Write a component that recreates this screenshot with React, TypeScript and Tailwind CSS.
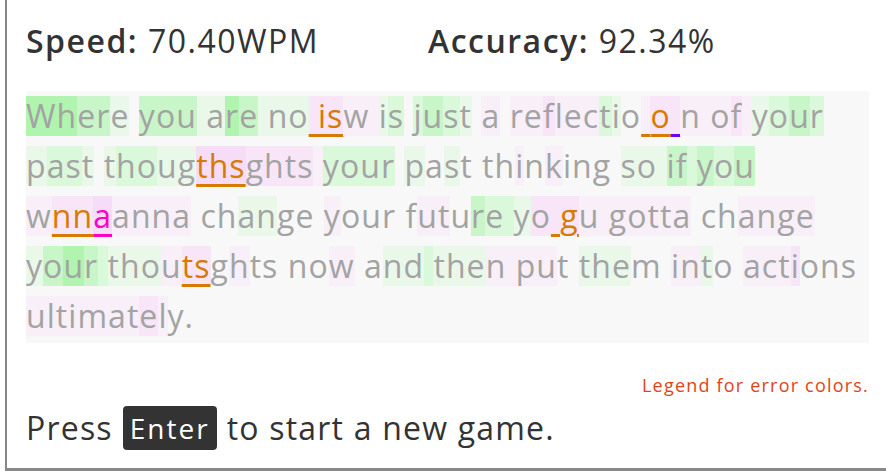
import React from 'react'

type Seg = [string, string, string?]

const bg: Record<string, string> = {
  '.': '',
  L: 'bg-[#eaf8ea]',
  l: 'bg-[#daf8da]',
  g: 'bg-[#c8f6c8]',
  G: 'bg-[#b0f4b0]',
  p: 'bg-[#f8eff8]',
  P: 'bg-[#f8e6f8]',
  Q: 'bg-[#f7dcf7]',
}

const mark: Record<string, string> = {
  n: 'text-[#a3a3a3]',
  o: 'text-[#d67a00] underline decoration-[3px] underline-offset-[6px] decoration-[#d67a00]',
  k: 'text-[#ff00c8] underline decoration-[3px] underline-offset-[6px] decoration-[#ff00c8]',
  v: 'text-[#a3a3a3] underline decoration-[3px] underline-offset-[6px] decoration-[#6a00ff]',
}

const lines: Seg[][] = [
  [
    ['Wh', 'G'], ['er', 'g'], ['e', 'L'], [' ', '.'], ['you', 'g'], [' a', 'L'], ['r', 'G'], ['e', 'g'],
    [' no', 'L'], [' is', 'P', 'o'], ['w ', 'p'], ['i', 'L'], ['s', 'l'], [' ', '.'], ['j', 'l'], ['u', 'g'],
    ['s', 'l'], ['t', 'L'], [' ', '.'], ['a', 'p'], [' ', '.'], ['re', 'p'], ['f', 'P'], ['lec', 'p'],
    ['t', 'l'], ['i', 'L'], ['o', '.'], [' ', 'p', 'o'], ['o', 'P', 'o'], [' ', 'P', 'v'], ['n o', 'p'],
    ['f', 'P'], [' ', 'p'], ['y', 'L'], ['o', 'l'], ['u', 'g'], ['r', 'l'],
  ],
  [
    ['p', 'L'], ['as', 'l'], ['t', 'L'], [' ', '.'], ['t', 'L'], ['ho', 'l'], ['ug', 'L'], ['ths', 'Q', 'o'],
    ['ghts', 'P'], [' ', 'p'], ['your', 'l'], [' ', '.'], ['p', 'L'], ['a', '.'], ['s', 'L'], ['t', '.'],
    [' ', '.'], ['th', '.'], ['i', 'p'], ['n', '.'], ['k', 'p'], ['ing', '.'], [' ', '.'], ['so', 'L'],
    [' ', 'L'], ['if', 'g'], [' ', 'l'], ['y', 'g'], ['o', 'l'], ['u', 'g'],
  ],
  [
    ['w', 'p'], ['nn', 'P', 'o'], ['a', 'Q', 'k'], ['anna', 'p'], [' ch', '.'], ['an', 'L'], ['ge', '.'],
    [' ', '.'], ['y', 'p'], ['our ', '.'], ['f', '.'], ['ut', 'p'], ['u', '.'], ['r', 'g'], ['e ', 'l'],
    ['y', 'L'], ['o', 'P'], [' g', 'P', 'o'], ['u', 'p'], [' go', 'p'], ['tta', 'p'], [' ch', '.'],
    ['ange', 'p'],
  ],
  [
    ['y', 'L'], ['o', 'g'], ['u', 'G'], ['r', 'g'], [' ', 'l'], ['tho', 'L'], ['u', 'p'], ['ts', 'P', 'o'],
    ['g', '.'], ['h', 'p'], ['ts', '.'], [' no', '.'], ['w', 'p'], [' a', '.'], ['nd', 'L'], [' ', 'l'],
    ['the', 'L'], ['n pu', 'p'], ['t', '.'], [' ', '.'], ['the', 'L'], ['m ', '.'], ['in', 'p'], ['t', 'L'],
    ['o ', '.'], ['act', 'p'], ['i', 'P'], ['ons', '.'],
  ],
  [['ultimat', 'p'], ['e', 'P'], ['l', 'p'], ['y.', '.']],
]

export default function App() {
  return (
    <div className="w-[886px] h-[475px] overflow-hidden bg-white font-['Open_Sans',sans-serif]">
      <div className="ml-[5px] w-[890px] border-l-2 border-b-[3px] border-[#888] pl-[19px] pr-[26px] pt-[19px] pb-[16px]">
        <div className="flex h-[44px] items-center text-[32px] tracking-[1.5px] text-[#333]">
          <div className="w-[402px]">
            <span className="font-semibold">Speed:</span> 70.40WPM
          </div>
          <div>
            <span className="font-semibold">Accuracy:</span> 92.34%
          </div>
        </div>
        <div className="mt-[28px] bg-[#f8f8f8] pb-[2px] text-[32px] tracking-[1.05px]">
          {lines.map((line, i) => (
            <div key={i} className="flex h-[50px] items-center whitespace-pre">
              {line.map(([t, b, m], j) => (
                <span key={j} className={`h-[40px] leading-[40px] ${bg[b]} ${mark[m ?? 'n']}`}>
                  {t}
                </span>
              ))}
            </div>
          ))}
        </div>
        <div className="mt-[30px] text-right text-[18px] tracking-[1.2px] leading-[24px] text-[#e0441a]">
          Legend for error colors.
        </div>
        <div className="mt-[7px] flex items-center text-[32px] tracking-[1.2px] text-[#333]">
          <span>Press</span>
          <span className="ml-[10px] mr-[10px] rounded-[4px] bg-[#333] px-[7px] h-[44px] leading-[44px] text-white text-[28px] tracking-[2px]">
            Enter
          </span>
          <span>to start a new game.</span>
        </div>
      </div>
    </div>
  )
}
